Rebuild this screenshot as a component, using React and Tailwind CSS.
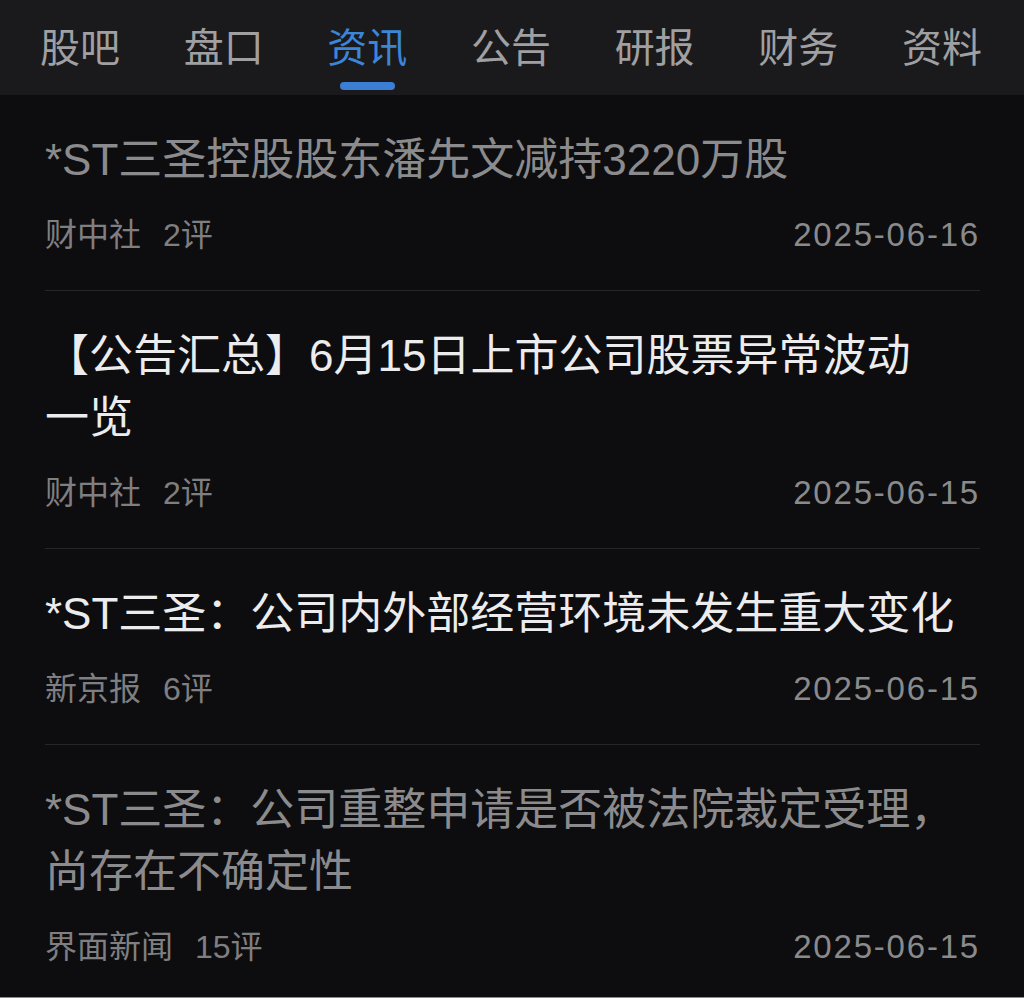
import React from 'react'

const tabs = ['股吧', '盘口', '资讯', '公告', '研报', '财务', '资料']

const news = [
  { title: '*ST三圣控股股东潘先文减持3220万股', source: '财中社', comments: '2评', date: '2025-06-16', read: true },
  { title: '【公告汇总】6月15日上市公司股票异常波动\n一览', source: '财中社', comments: '2评', date: '2025-06-15', read: false },
  { title: '*ST三圣：公司内外部经营环境未发生重大变化', source: '新京报', comments: '6评', date: '2025-06-15', read: false },
  { title: '*ST三圣：公司重整申请是否被法院裁定受理，尚存在不确定性', source: '界面新闻', comments: '15评', date: '2025-06-15', read: true },
]

export default function App() {
  const active = '资讯'

  return (
    <div
      className="h-[998px] overflow-hidden bg-[#0d0d0f] border-b border-[#8a8a8a]"
      style={{ fontFamily: '"Liberation Sans", "Noto Sans CJK SC", sans-serif' }}
    >
      {/* tab bar */}
      <div className="h-[95px] bg-[#1a1a1c] flex items-start justify-between pl-[40px] pr-[42px] pt-[28px]">
        {tabs.map((t) => (
          <div key={t} className="flex flex-col items-center">
            <span className={`text-[40px] leading-[40px] ${t === active ? 'text-[#3b86d8]' : 'text-[#a0a0a2]'}`}>{t}</span>
            {t === active && <div className="mt-[14px] h-[8px] w-[55px] rounded-full bg-[#3b7fd4]"></div>}
          </div>
        ))}
      </div>

      {/* news list */}
      <div className="pl-[45px] pr-[44px]">
        {news.map((n, i) => (
          <div key={i} className={`pt-[34px] pb-[35px] ${i < news.length - 1 ? 'border-b border-[#262628]' : ''}`}>
            <div className={`whitespace-pre-line text-[44px] leading-[62px] ${n.read ? 'text-[#8b8b8d]' : 'text-[#ececee]'}`}>{n.title}</div>
            <div className="mt-[24px] flex items-center justify-between text-[32px] leading-[40px] text-[#7f7f81]">
              <div className="flex gap-[22px]">
                <span>{n.source}</span>
                <span>{n.comments}</span>
              </div>
              <span className="text-[33px] tracking-[1.8px] text-[#8a8a8c]">{n.date}</span>
            </div>
          </div>
        ))}
      </div>
    </div>
  )
}
